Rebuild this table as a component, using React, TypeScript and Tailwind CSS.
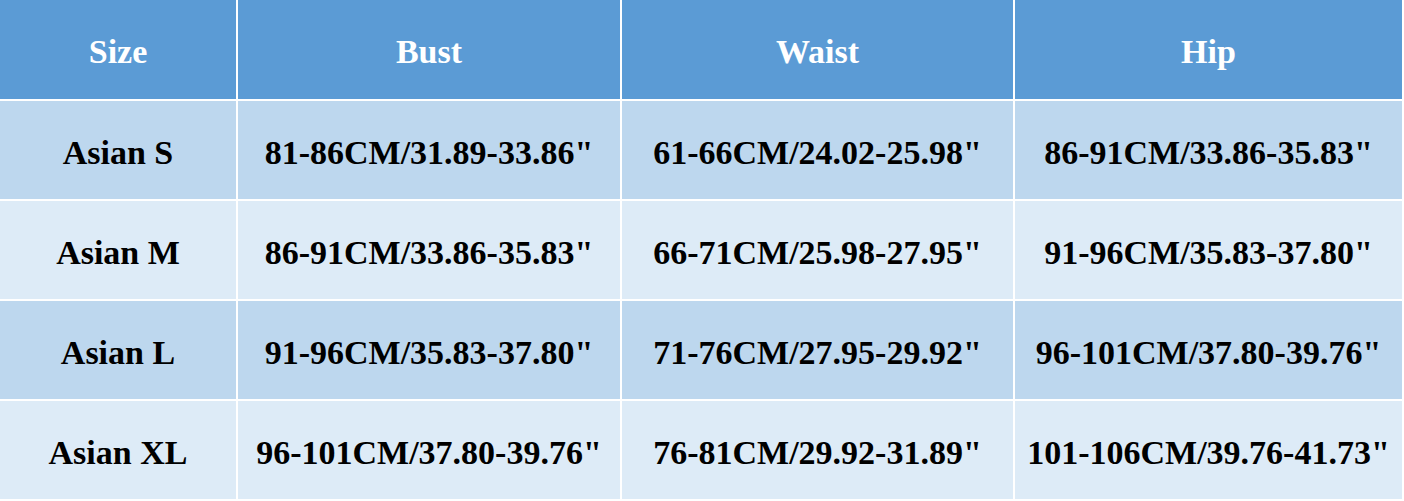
import React from 'react';

const HEADERS = ['Size', 'Bust', 'Waist', 'Hip'];

const ROWS: string[][] = [
  ['Asian S', '81-86CM/31.89-33.86"', '61-66CM/24.02-25.98"', '86-91CM/33.86-35.83"'],
  ['Asian M', '86-91CM/33.86-35.83"', '66-71CM/25.98-27.95"', '91-96CM/35.83-37.80"'],
  ['Asian L', '91-96CM/35.83-37.80"', '71-76CM/27.95-29.92"', '96-101CM/37.80-39.76"'],
  ['Asian XL', '96-101CM/37.80-39.76"', '76-81CM/29.92-31.89"', '101-106CM/39.76-41.73"'],
];

export default function App() {
  return (
    <div className="w-[1404px] h-[501px] bg-white">
      <div
        className="w-[1402px] grid grid-cols-[236px_382px_391px_387px] grid-rows-[99px_98px_98px_98px_98px] gap-[2px] bg-white text-[34px] font-bold"
        style={{ fontFamily: '"Liberation Serif", Georgia, serif' }}
      >
        {HEADERS.map(h => (
          <div key={h} className="flex items-center justify-center pt-[4px] bg-[#5b9bd5] text-white">
            {h}
          </div>
        ))}
        {ROWS.map((row, i) =>
          row.map((cell, j) => (
            <div
              key={`${i}-${j}`}
              className={`flex items-center justify-center pt-[4px] text-black whitespace-nowrap ${i % 2 === 0 ? 'bg-[#bdd7ee]' : 'bg-[#ddebf7]'}`}
            >
              {cell}
            </div>
          ))
        )}
      </div>
    </div>
  );
}
